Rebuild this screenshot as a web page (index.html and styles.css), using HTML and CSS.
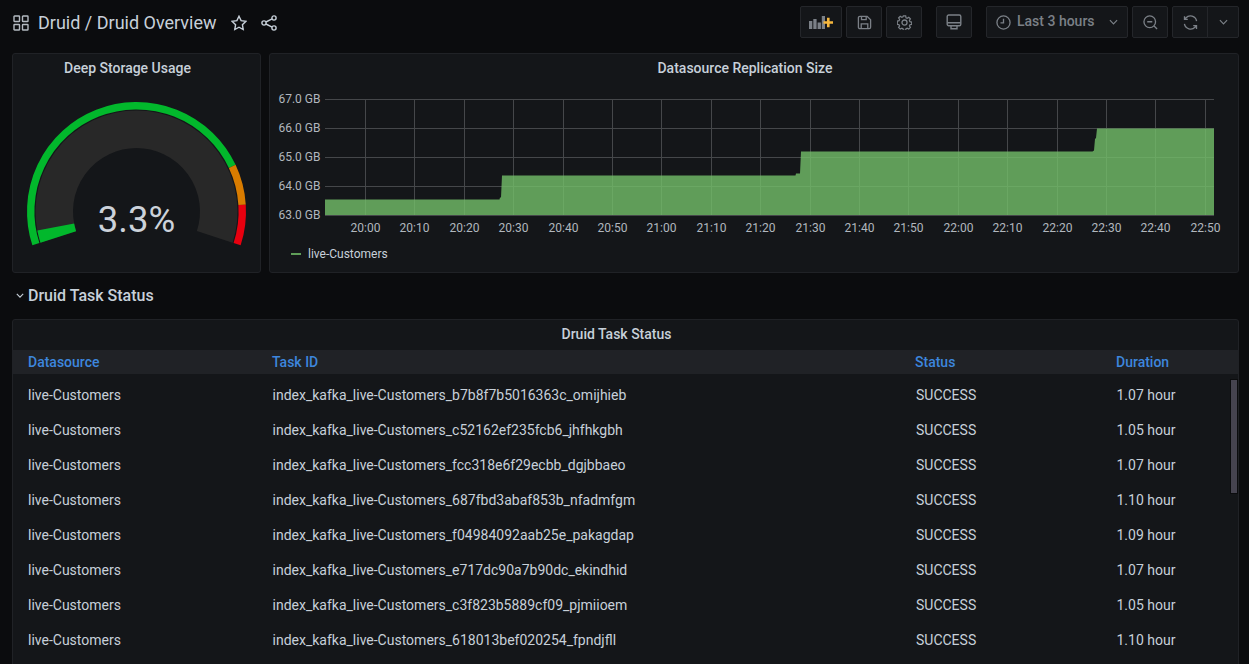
FILE: index.html
```html
<!DOCTYPE html>
<html lang="en">
<head>
<meta charset="utf-8">
<title>Druid / Druid Overview</title>
<link rel="stylesheet" href="styles.css">
</head>
<body>
<header class="nav">
  <div class="crumbs">
    <svg class="ico ico-apps" viewBox="0 0 16 16"><rect x="1" y="1" width="5.5" height="5.5" rx=".6"/><rect x="9.5" y="1" width="5.5" height="5.5" rx=".6"/><rect x="1" y="9.5" width="5.5" height="5.5" rx=".6"/><rect x="9.5" y="9.5" width="5.5" height="5.5" rx=".6"/></svg>
    <h1 class="dash-title">Druid / Druid Overview</h1>
    <svg class="ico ico-star" viewBox="0 0 16 16"><path d="M8 1.2l2.1 4.4 4.8.7-3.500 3.400.8 4.800L8 12.200l-4.200 2.300.8-4.800L1.100 6.300l4.800-.7z"/></svg>
    <svg class="ico ico-share" viewBox="0 0 16 16"><circle cx="3" cy="8" r="2.100"/><circle cx="13" cy="3" r="2.100"/><circle cx="13" cy="13" r="2.100"/><path d="M4.900 7l6.200-3.100M4.900 9l6.200 3.100"/></svg>
  </div>
  <div class="tools">
    <div class="tool-group">
      <button class="btn btn-add"><svg class="add-svg" viewBox="0 0 24 13"><path class="bars" d="M0 5h3.300v8H0zM4.300 3h3.300v10H4.300zM8.600 6.500h3.300V13H8.600zM12.800 0h3.200v13h-3.200z"/><path class="plus" d="M14.500 5.200h3.500V1.800h2.600v3.400H24v2.600h-3.400v3.400H18V7.800h-3.500z"/></svg></button>
      <button class="btn"><svg class="ico" viewBox="0 0 16 16"><path d="M3 1.500h7.800l3.700 3.700V13a1.500 1.500 0 0 1-1.500 1.500H3A1.500 1.500 0 0 1 1.500 13V3A1.500 1.500 0 0 1 3 1.500z"/><path d="M4.800 1.700v3.300h5V1.700M4.500 14.300V9.500h7v4.800"/></svg></button>
      <button class="btn"><svg class="ico" viewBox="0 0 16 16"><circle cx="8" cy="8" r="2.700"/><path d="M6.700 1h2.600l.4 2 1.300.6 1.800-1.100 1.800 1.800-1.100 1.800.6 1.300 2 .4v2.600l-2 .4-.6 1.300 1.100 1.800-1.800 1.800-1.800-1.100-1.300.6-.4 2H6.700l-.4-2-1.300-.6-1.800 1.100-1.800-1.800 1.100-1.800-.6-1.300-2-.4V6.700l2-.4.6-1.300-1.100-1.800 1.800-1.800L5 2.500l1.300-.6z" transform="translate(.4 .1) scale(.95)"/></svg></button>
    </div>
    <button class="btn btn-tv"><svg class="ico ico-tv" viewBox="0 0 16 16"><rect x="1.200" y="1" width="13.600" height="10.800" rx="1.500"/><path d="M1.200 8.700h13.600M5 11.800v3h6v-3"/></svg></button>
    <button class="btn btn-time">
      <svg class="ico" viewBox="0 0 16 16"><circle cx="8" cy="8" r="7"/><path d="M8 4v4.300H4.800"/></svg>
      <span class="time-label">Last 3 hours</span>
      <svg class="chev" viewBox="0 0 10 6"><path d="M1 1l4 4 4-4"/></svg>
    </button>
    <button class="btn btn-zoom"><svg class="ico" viewBox="0 0 16 16"><circle cx="7.200" cy="7.200" r="6.200"/><path d="M4.500 7.200h5.400M11.800 11.800l3.200 3.200"/></svg></button>
    <div class="refresh">
      <button class="btn btn-sync"><svg class="ico" viewBox="0 0 16 16"><path d="M14.500 6.500A6.700 6.700 0 0 0 3 3.200L1.600 4.700M1.600 1.200v3.500h3.500M1.500 9.500A6.700 6.700 0 0 0 13 12.800l1.400-1.500M14.400 14.800v-3.500h-3.500"/></svg></button>
      <button class="btn btn-more"><svg class="chev" viewBox="0 0 10 6"><path d="M1 1l4 4 4-4"/></svg></button>
    </div>
  </div>
</header>

<main class="dash">
  <section class="top-row">
    <article class="panel panel-gauge">
      <h2 class="panel-title">Deep Storage Usage</h2>
      <svg class="gauge" viewBox="13 84 247 188">
        <path class="g-band" d="M58.28 236.92A82.250 82.250 0 1 1 214.72 236.92"/>
        <path class="g-value" d="M58.28 236.92A82.250 82.250 0 0 1 55.73 227.01"/>
        <path class="g-ring g-green" d="M35.88 244.19A105.800 105.800 0 0 1 232.23 166.45"/>
        <path class="g-ring g-orange" d="M232.23 166.45A105.800 105.800 0 0 1 242.09 204.86"/>
        <path class="g-ring g-red" d="M242.09 204.86A105.800 105.800 0 0 1 237.12 244.19"/>
        <text class="g-text" x="136.500" y="231.500">3.3%</text>
      </svg>
    </article>
    <article class="panel panel-chart">
      <h2 class="panel-title">Datasource Replication Size</h2>
      <svg class="chart" viewBox="270 84 968 156">
        <path class="grid" d="M325 99.500H1214M325 128.500H1214M325 157.500H1214M325 186.500H1214M325 215.500H1214M365.500 99V215M414.500 99V215M464.500 99V215M513.500 99V215M563.500 99V215M612.500 99V215M661.500 99V215M711.500 99V215M760.500 99V215M810.500 99V215M859.500 99V215M908.500 99V215M958.500 99V215M1007.500 99V215M1057.500 99V215M1106.500 99V215M1155.500 99V215M1205.500 99V215"/>
        <path class="area" d="M325 215V199.500H499.500L500 197.500H501L502 175.500H795.500L796 173.500H800L801 151.500H1092.500L1094 150.500L1095 139L1096 138L1097 128.500H1214V215Z"/>
        <g class="y-labels">
          <text x="320.500" y="103">67.0 GB</text>
          <text x="320.500" y="132">66.0 GB</text>
          <text x="320.500" y="161">65.0 GB</text>
          <text x="320.500" y="190">64.0 GB</text>
          <text x="320.500" y="219">63.0 GB</text>
        </g>
        <g class="x-labels">
          <text x="365.500" y="232">20:00</text><text x="414.500" y="232">20:10</text><text x="464.500" y="232">20:20</text><text x="513.500" y="232">20:30</text><text x="563.500" y="232">20:40</text><text x="612.500" y="232">20:50</text><text x="661.500" y="232">21:00</text><text x="711.500" y="232">21:10</text><text x="760.500" y="232">21:20</text><text x="810.500" y="232">21:30</text><text x="859.500" y="232">21:40</text><text x="908.500" y="232">21:50</text><text x="958.500" y="232">22:00</text><text x="1007.500" y="232">22:10</text><text x="1057.500" y="232">22:20</text><text x="1106.500" y="232">22:30</text><text x="1155.500" y="232">22:40</text><text x="1205.500" y="232">22:50</text>
        </g>
      </svg>
      <div class="legend"><span class="legend-dash"></span><span>live-Customers</span></div>
    </article>
  </section>

  <div class="row-title">
    <svg class="row-chev" viewBox="0 0 10 6"><path d="M1 1l4 4 4-4"/></svg>
    <span>Druid Task Status</span>
  </div>

  <section class="panel panel-table">
    <h2 class="panel-title table-title">Druid Task Status</h2>
    <div class="thead"><span>Datasource</span><span>Task ID</span><span>Status</span><span>Duration</span></div>
    <div class="tbody">
      <div class="tr"><span>live-Customers</span><span>index_kafka_live-Customers_b7b8f7b5016363c_omijhieb</span><span>SUCCESS</span><span>1.07 hour</span></div>
      <div class="tr"><span>live-Customers</span><span>index_kafka_live-Customers_c52162ef235fcb6_jhfhkgbh</span><span>SUCCESS</span><span>1.05 hour</span></div>
      <div class="tr"><span>live-Customers</span><span>index_kafka_live-Customers_fcc318e6f29ecbb_dgjbbaeo</span><span>SUCCESS</span><span>1.07 hour</span></div>
      <div class="tr"><span>live-Customers</span><span>index_kafka_live-Customers_687fbd3abaf853b_nfadmfgm</span><span>SUCCESS</span><span>1.10 hour</span></div>
      <div class="tr"><span>live-Customers</span><span>index_kafka_live-Customers_f04984092aab25e_pakagdap</span><span>SUCCESS</span><span>1.09 hour</span></div>
      <div class="tr"><span>live-Customers</span><span>index_kafka_live-Customers_e717dc90a7b90dc_ekindhid</span><span>SUCCESS</span><span>1.07 hour</span></div>
      <div class="tr"><span>live-Customers</span><span>index_kafka_live-Customers_c3f823b5889cf09_pjmiioem</span><span>SUCCESS</span><span>1.05 hour</span></div>
      <div class="tr"><span>live-Customers</span><span>index_kafka_live-Customers_618013bef020254_fpndjfll</span><span>SUCCESS</span><span>1.10 hour</span></div>
      <div class="scrollbar"></div>
    </div>
  </section>
</main>
</body>
</html>
```
FILE: styles.css
```css
* { box-sizing: border-box; }
html, body { margin: 0; height: 100%; }
body {
  background: #0b0c0e;
  color: #c7d0d9;
  font-family: Roboto, "Liberation Sans", sans-serif;
  font-size: 14px;
  overflow: hidden;
}
h1, h2 { margin: 0; }

.nav {
  height: 53px;
  padding: 6px 10px 0 13px;
  display: flex;
  justify-content: space-between;
  align-items: flex-start;
}
.crumbs { display: flex; align-items: center; height: 34px; }
.ico {
  width: 15px;
  height: 15px;
  fill: none;
  stroke: currentColor;
  stroke-width: 1.4;
  flex: none;
}
.ico-apps { width: 16px; height: 16px; color: #b4bac1; margin-right: 9px; }
.ico-star { width: 16px; height: 16px; color: #c7d0d9; margin-left: 14px; }
.ico-share { width: 16px; height: 16px; color: #c7d0d9; margin-left: 14px; }
.dash-title { font-size: 18px; font-weight: 400; line-height: 34px; color: #c7d0d9; }

.tools { display: flex; align-items: flex-start; }
.tool-group { display: flex; gap: 4px; }
.btn {
  height: 32px;
  width: 36px;
  padding: 0;
  background: #141619;
  border: 1px solid #24262a;
  border-radius: 2px;
  color: #7b8087;
  display: flex;
  align-items: center;
  justify-content: center;
  font: inherit;
}
.btn-add { width: 42px; }
.add-svg { width: 24px; height: 13px; }
.bars { fill: #7b8087; }
.plus { fill: #f5b73d; }
.ico-tv { width: 16px; height: 16px; }
.btn-tv { margin-left: 14px; }
.btn-time {
  margin-left: 14px;
  width: 142px;
  justify-content: flex-start;
  padding: 0 9px;
}
.time-label {
  margin-left: 6px;
  font-weight: 500;
  font-size: 14px;
  line-height: 16px;
  margin-top: -2px;
  color: #7b8087;
}
.chev { width: 9px; height: 6px; fill: none; stroke: currentColor; stroke-width: 1.3; flex: none; }
.btn-time .chev { margin-left: auto; }
.btn-zoom { margin-left: 4px; }
.refresh { display: flex; margin-left: 4px; }
.btn-sync { width: 36px; border-radius: 2px 0 0 2px; }
.btn-more { width: 32px; margin-left: -1px; border-radius: 0 2px 2px 0; }

.dash { padding: 0 10px 0 12px; }
.top-row { display: flex; gap: 8px; height: 220px; }
.panel {
  background: #141619;
  border: 1px solid #202226;
  border-radius: 3px;
}
.panel-gauge { width: 249px; flex: none; }
.panel-chart { flex: 1; min-width: 0; }
.panel-title {
  height: 30px;
  padding-right: 18px;
  font-size: 14px;
  font-weight: 500;
  line-height: 28px;
  text-align: center;
  color: #c7d0d9;
}
.gauge { display: block; width: 247px; height: 188px; }
.g-band { fill: none; stroke: #282828; stroke-width: 37.5; }
.g-value { fill: none; stroke: #02b82c; stroke-width: 37.5; }
.g-ring { fill: none; stroke-width: 7.4; }
.g-green { stroke: #02b82c; }
.g-orange { stroke: #d97c00; }
.g-red { stroke: #e8000f; }
.g-text { font-size: 36.5px; fill: #ccd2da; text-anchor: middle; }

.chart { display: block; width: 968px; height: 156px; }
.grid { fill: none; stroke: #45474a; stroke-width: 1; }
.area { fill: rgba(115, 191, 105, .8); }
.y-labels text { font-size: 12px; fill: #b1b7be; text-anchor: end; }
.x-labels text { font-size: 12px; fill: #b1b7be; text-anchor: middle; }
.legend {
  display: flex;
  align-items: center;
  font-size: 12px;
  line-height: 16px;
  padding: 6px 0 0 21px;
  color: #c7d0d9;
}
.legend-dash { width: 10px; height: 2px; background: #5f9e58; margin-right: 7px; }

.row-title {
  height: 44px;
  margin-bottom: 2px;
  display: flex;
  align-items: center;
  font-size: 16px;
  font-weight: 500;
  color: #c7d0d9;
  padding-left: 4px;
}
.row-chev { width: 8px; height: 5px; margin-right: 4px; fill: none; stroke: currentColor; stroke-width: 1.400; }

.panel-table { height: 400px; }
.table-title { line-height: 29px; }
.thead, .tr { display: grid; padding-left: 15px; }
.thead {
  grid-template-columns: 244px 643px 201px 1fr;
  height: 24px;
  align-items: center;
  background: #202226;
  color: #3d86dd;
  font-weight: 500;
}
.tbody { position: relative; padding-top: 3px; }
.tr {
  grid-template-columns: 244.5px 643.5px 200.5px 1fr;
  height: 35px;
  align-items: center;
  color: #c7d0d9;
}
.scrollbar {
  position: absolute;
  top: 5px;
  right: 0;
  width: 8px;
  height: 115px;
  background: #45434f;
  border: 1px solid #0b0c0e;
}
```
